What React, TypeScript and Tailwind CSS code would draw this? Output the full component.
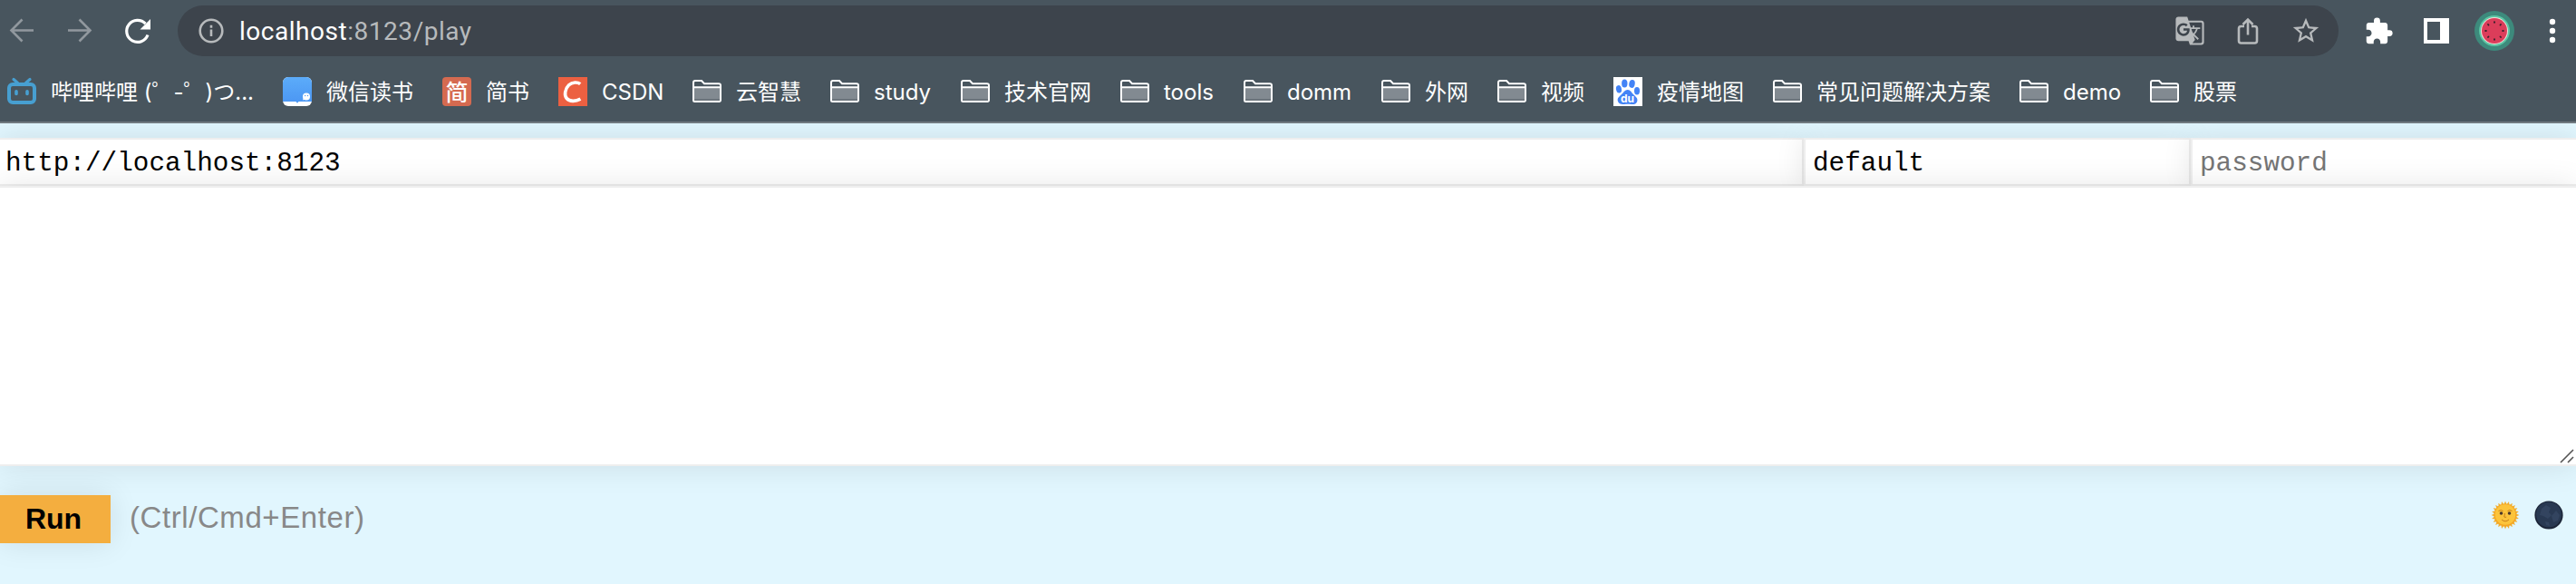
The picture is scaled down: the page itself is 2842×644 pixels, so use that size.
import type { ReactNode } from "react";
import { MdExtension, MdGTranslate, MdStarBorder } from "react-icons/md";

type Bookmark = {
  label: string;
  width: string;
  icon?: ReactNode;
};

function FolderIcon() {
  return (
    <svg width="32" height="32" viewBox="0 0 32 32" fill="none">
      <path d="M2 12h28v16H2z" fill="#828a91" />
      <path d="M2 24h28v3H2z" fill="#6c757c" />
      <path
        d="M1 6a2 2 0 0 1 2-2h7l3 3.200h16a2 2 0 0 1 2 2V25.500a1.500 1.500 0 0 1-1.500 1.500h-27A1.500 1.500 0 0 1 1 25.500zM1 11.200h30"
        stroke="#fff"
        strokeWidth="2"
      />
    </svg>
  );
}

function BilibiliIcon() {
  return (
    <svg width="32" height="32" viewBox="0 0 32 32" fill="none" stroke="#479fd1" strokeLinecap="round">
      <rect x="2" y="8" width="28" height="20" rx="4" strokeWidth="4" />
      <path d="M7 2.500l4.500 4M25 2.500l-4.500 4" strokeWidth="3.200" />
      <path d="M10 15.800v2.600M22 15.800v2.600" strokeWidth="3.600" />
    </svg>
  );
}

function WeReadIcon() {
  return (
    <svg width="32" height="32" viewBox="0 0 32 32">
      <defs>
        <linearGradient id="weread" x1="0" y1="0" x2="0" y2="1">
          <stop offset="0" stopColor="#5cacfa" />
          <stop offset="1" stopColor="#4b96f3" />
        </linearGradient>
      </defs>
      <rect width="32" height="32" rx="6" fill="#fff" />
      <path d="M6 0h20a6 6 0 0 1 6 6v21H17.500L16 28.800 14.500 27H0V6a6 6 0 0 1 6-6z" fill="url(#weread)" />
      <circle cx="26" cy="21.500" r="4" fill="#fff" />
      <path d="M22 25.500l1-3 2 2z" fill="#fff" />
      <circle cx="24.700" cy="20.500" r=".7" fill="#4b96f3" />
      <circle cx="27.500" cy="20.500" r=".7" fill="#4b96f3" />
    </svg>
  );
}

function JianshuIcon() {
  return (
    <span className="flex size-8 items-center justify-center rounded-[4px] bg-[#d56a50] pb-0.5 font-['Noto_Sans_CJK_SC',sans-serif] text-[25px] leading-none font-medium text-white">
      简
    </span>
  );
}

function CsdnIcon() {
  return (
    <svg width="32" height="32" viewBox="0 0 32 32" fill="none">
      <path d="M0 0h32v32H0z" fill="#ec6041" />
      <path
        d="M24.200 7.600C21.500 5.400 15.500 5 11.600 8.800 7.200 13 6.300 20 9.200 23.500c3.200 3.800 10 3.600 15.200.6"
        stroke="#fff"
        strokeWidth="3.600"
      />
    </svg>
  );
}

function BaiduIcon() {
  return (
    <svg width="32" height="32" viewBox="0 0 32 32" fill="#4383f6">
      <path d="M0 0h32v32H0z" fill="#fff" />
      <ellipse cx="12.300" cy="7" rx="3.200" ry="4.600" />
      <ellipse cx="20.500" cy="7.400" rx="3.200" ry="4.500" transform="rotate(10 20.500 7.400)" />
      <ellipse cx="6" cy="13.300" rx="3" ry="4.200" transform="rotate(-12 6 13.300)" />
      <ellipse cx="26" cy="15.200" rx="3" ry="4.200" />
      <path d="M15.800 14c3 0 4.200 3.200 6.600 5.400 2.600 2.400 4.600 4 3.900 7-.8 3.600-4.300 3.800-6.300 3.600-2.800-.3-5.300-.3-8 0-2.500.3-6.200.2-7.100-3.400-.8-3.200 1-4.900 3.700-7.200 2.600-2.200 3.900-5.400 7.200-5.400z" />
      <text x="15.500" y="27.600" fill="#fff" fontSize="12" fontWeight="700" textAnchor="middle" fontFamily="Inter, sans-serif">
        du
      </text>
    </svg>
  );
}

const BOOKMARKS: Bookmark[] = [
  { label: "哔哩哔哩 (゜-゜)つ...", width: "w-[224px]", icon: <BilibiliIcon /> },
  { label: "微信读书", width: "w-24", icon: <WeReadIcon /> },
  { label: "简书", width: "w-12", icon: <JianshuIcon /> },
  { label: "CSDN", width: "w-[68px]", icon: <CsdnIcon /> },
  { label: "云智慧", width: "w-[72px]" },
  { label: "study", width: "w-16" },
  { label: "技术官网", width: "w-24" },
  { label: "tools", width: "w-14" },
  { label: "domm", width: "w-[72px]" },
  { label: "外网", width: "w-12" },
  { label: "视频", width: "w-12" },
  { label: "疫情地图", width: "w-24", icon: <BaiduIcon /> },
  { label: "常见问题解决方案", width: "w-48" },
  { label: "demo", width: "w-16" },
  { label: "股票", width: "w-12" },
];

// seeds sit on a circle around the centre of the melon
const SEEDS = [0, 45, 90, 135, 180, 225, 270, 315];

function Avatar() {
  return (
    <svg width="44" height="44" viewBox="0 0 44 44">
      <circle cx="22" cy="22" r="22" fill="#3d8a7c" />
      <circle cx="22" cy="22" r="17" fill="#5cc7a5" />
      <circle cx="22" cy="22" r="15" fill="#f6dcd8" />
      <circle cx="22" cy="22" r="14" fill="#db3d5a" />
      {SEEDS.map((angle) => (
        <ellipse key={angle} cx="22" cy="12.500" rx=".9" ry="1.300" fill="#33202a" transform={`rotate(${angle} 22 22)`} />
      ))}
    </svg>
  );
}

function Toolbar() {
  return (
    <div className="flex h-[68px] items-center pl-2">
      <svg width="32" height="32" viewBox="0 0 32 32" fill="none" stroke="#91989e" strokeWidth="2.600">
        <path d="M29 15.500H5M16.500 3.500l-12 12 12 12" />
      </svg>
      <svg className="ml-8" width="32" height="32" viewBox="0 0 32 32" fill="none" stroke="#91989e" strokeWidth="2.600">
        <path d="M3 15.500h24M15.500 3.500l12 12-12 12" />
      </svg>
      <svg className="ml-8" width="32" height="32" viewBox="0 0 32 32" fill="none">
        <path d="M24.500 8.200A12 12 0 1 0 27 20.500" stroke="#fff" strokeWidth="3.200" />
        <path d="M30 3v11.500H18.500z" fill="#fff" />
      </svg>

      <div className="ml-7 flex h-14 w-[2384px] items-center rounded-full bg-[#3d444c] pr-[19px] pl-[22px] text-[#b7babc]">
        <svg width="30" height="30" viewBox="0 0 30 30" fill="none" stroke="#b7babc" strokeWidth="2.600">
          <circle cx="15" cy="15" r="12.300" />
          <path d="M15 13.500v7.500M15 8.800v3" />
        </svg>
        <div className="ml-4 flex-1 pt-0.5 font-[Roboto,sans-serif] text-[28px] leading-none tracking-[0.53px]">
          <span className="text-white">localhost</span>:8123/play
        </div>
        <MdGTranslate size={34} />
        <svg className="ml-[30px]" width="34" height="34" viewBox="0 0 34 34" fill="none" stroke="#b7babc" strokeWidth="2.600">
          <path d="M13 12H9.500A2.500 2.500 0 0 0 7 14.500V28a2.500 2.500 0 0 0 2.500 2.500h15A2.500 2.500 0 0 0 27 28V14.500a2.500 2.500 0 0 0-2.500-2.500H21M17 21.500V5M11.500 10L17 4.500l5.500 5.500" />
        </svg>
        <MdStarBorder className="ml-[30px]" size={34} />
      </div>

      <MdExtension className="ml-7 text-white" size={33} />
      <svg className="ml-[33px]" width="28" height="28" viewBox="0 0 28 28">
        <path fillRule="evenodd" d="M0 0h28v28H0zM4 4v20h14V4z" fill="#fff" />
      </svg>
      <div className="ml-7">
        <Avatar />
      </div>
      <svg className="ml-[38px]" width="8" height="28" viewBox="0 0 8 28" fill="#fff">
        <circle cx="4" cy="4" r="3.200" />
        <circle cx="4" cy="14" r="3.200" />
        <circle cx="4" cy="24" r="3.200" />
      </svg>
    </div>
  );
}

function BookmarkBar() {
  return (
    <div className="flex h-[66px] items-center gap-8 pl-2">
      {BOOKMARKS.map((bookmark) => (
        <div key={bookmark.label} className="flex shrink-0 items-center gap-4">
          {bookmark.icon ?? <FolderIcon />}
          <span
            className={`pt-px font-[Inter,'Noto_Sans_CJK_SC',sans-serif] text-[24px] leading-8 whitespace-nowrap text-white ${bookmark.width}`}
          >
            {bookmark.label}
          </span>
        </div>
      ))}
    </div>
  );
}

function SunFace() {
  return (
    <svg width="32" height="32" viewBox="0 0 32 32">
      {Array.from({ length: 24 }, (_, i) => (
        <path key={i} d="M14.300 4.500L16 .6 17.700 4.500z" fill="#f2ae2e" transform={`rotate(${i * 15} 16 16)`} />
      ))}
      <circle cx="16" cy="16" r="12.400" fill="#f5a623" />
      <circle cx="16" cy="15.500" r="11.200" fill="#fcc43b" />
      <circle cx="11.500" cy="14" r="1.800" fill="#4d3a2c" />
      <circle cx="20.500" cy="14" r="1.800" fill="#4d3a2c" />
      <path
        d="M8.500 11.500q3-2 5 0M18.500 11.500q2-2 5 0M15.500 14l-.7 4q1.200 1 2.400 0M12 21q4 3.600 8 0"
        fill="none"
        stroke="#c9801a"
      />
    </svg>
  );
}

function NewMoon() {
  return (
    <svg width="32" height="32" viewBox="0 0 32 32">
      <circle cx="16" cy="16" r="15.600" fill="#1c2538" />
      <circle cx="16" cy="15.500" r="14" fill="#293952" />
      <path d="M8 9l5-4 5 3-2 5 3 3-4 4-5-3-4-1zM19 17l5-6 4 5-2 6-5 2zM12 23l4 1 1 4-4-1z" fill="#33445f" />
    </svg>
  );
}

const FIELD =
  "h-[53px] min-w-0 border-y-2 border-[#eee] bg-white pt-1 font-['Liberation_Mono',monospace] text-[29.33px] leading-none text-black shadow-[0_0_32px_rgba(0,0,0,0.1)] outline-none placeholder:text-[#757575]";

export default function App() {
  return (
    <div className="flex h-[644px] w-[2842px] flex-col overflow-hidden bg-[#e1f6fe]">
      <header className="relative z-10 border-b-2 border-[#70797f] bg-[#48555e]">
        <Toolbar />
        <BookmarkBar />
      </header>

      <main className="pt-4 font-['Liberation_Sans',sans-serif]">
        <div className="flex">
          <input className={`${FIELD} w-[1990px] border-r-2 pl-1.5`} defaultValue="http://localhost:8123" />
          <input className={`${FIELD} w-[427px] border-x-2 pl-2`} defaultValue="default" />
          <input className={`${FIELD} flex-1 border-l-2 pl-2`} type="password" placeholder="password" />
        </div>
        {/* relative, so that its shadow falls over the row of inputs */}
        <div className="relative flex h-[309px] items-end justify-end border-y-2 border-[#eee] bg-white pr-0.5 shadow-[0_0_32px_rgba(0,0,0,0.1)]">
          <svg width="16" height="18" viewBox="0 0 16 18" fill="none" stroke="#555" strokeWidth="1.600">
            <path d="M1 16L15 2M9 16l6-6" />
          </svg>
        </div>

        <div className="mt-8 flex items-start">
          <button className="h-[53px] w-[122px] bg-[#f4ae3f] pr-1 pb-0.5 text-[32px] leading-none font-bold text-black shadow-[0_0_32px_rgba(0,0,0,0.1)]">
            Run
          </button>
          <span className="mt-[7px] ml-[21px] text-[33px] leading-9 tracking-[0.58px] text-[#888]">(Ctrl/Cmd+Enter)</span>
          <div className="mt-1.5 mr-[14px] ml-auto flex gap-4">
            <SunFace />
            <NewMoon />
          </div>
        </div>
      </main>
    </div>
  );
}
